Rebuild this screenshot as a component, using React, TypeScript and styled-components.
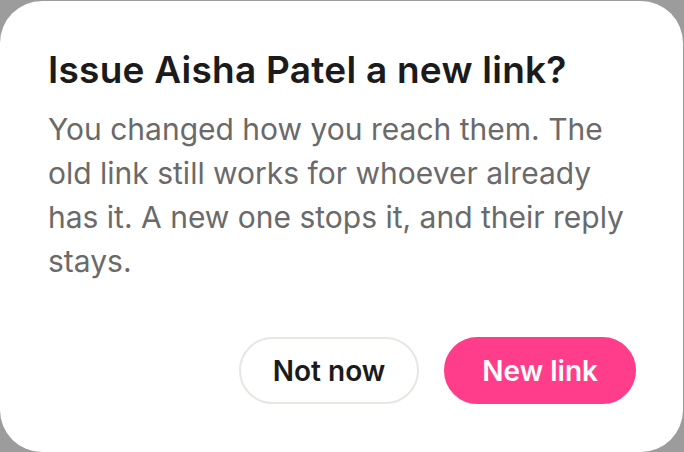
import styled, { createGlobalStyle } from 'styled-components'

const GlobalStyle = createGlobalStyle`
  html,
  body {
    margin: 0;
    padding: 0;
    background: #9c9c9c;
    font-family: Inter, 'Noto Sans', 'Liberation Sans', sans-serif;
  }

  * {
    box-sizing: border-box;
  }
`

const Backdrop = styled.div`
  width: 684px;
  height: 452px;
  overflow: hidden;
  padding-top: 1px;
  background: #9c9c9c;
`

const Dialog = styled.section`
  width: 683px;
  height: 451px;
  background: #ffffff;
  border-radius: 42px;
  padding: 47px 47px 0 48px;
  display: flex;
  flex-direction: column;
`

const Title = styled.h2`
  margin: 0;
  font-size: 37px;
  line-height: 44px;
  font-weight: 600;
  color: #1b1b1b;
  letter-spacing: 0.25px;
`

const Body = styled.p`
  margin: 15px 0 0;
  font-size: 30px;
  line-height: 44px;
  font-weight: 400;
  color: #6a6a6a;
  max-width: 580px;
`

const Actions = styled.div`
  display: flex;
  justify-content: flex-end;
  gap: 25px;
  margin-top: 54px;
`

const Button = styled.button<{ $primary?: boolean }>`
  height: 67px;
  padding: 0 ${(p) => (p.$primary ? '36px' : '32px')};
  border-radius: 34px;
  font-family: inherit;
  font-size: 28px;
  font-weight: 600;
  cursor: pointer;
  border: 2px solid ${(p) => (p.$primary ? '#ff3d8a' : '#e9e6e2')};
  background: ${(p) => (p.$primary ? '#ff3d8a' : '#ffffff')};
  color: ${(p) => (p.$primary ? '#ffffff' : '#1b1b1b')};
`

export default function App() {
  return (
    <Backdrop>
      <GlobalStyle />
      <Dialog>
        <Title>Issue Aisha Patel a new link?</Title>
        <Body>
          You changed how you reach them. The old link still works for whoever already has it. A new
          one stops it, and their reply stays.
        </Body>
        <Actions>
          <Button>Not now</Button>
          <Button $primary>New link</Button>
        </Actions>
      </Dialog>
    </Backdrop>
  )
}
